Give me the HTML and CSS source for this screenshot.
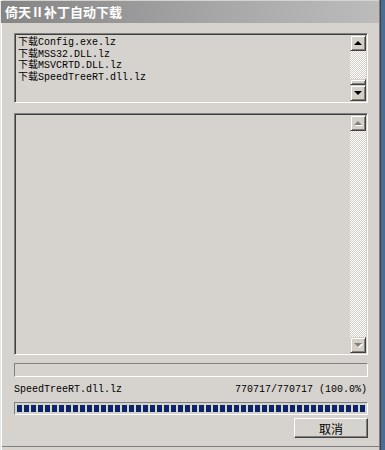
FILE: index.html
```html
<!DOCTYPE html>
<html>
<head>
<meta charset="utf-8">
<link rel="stylesheet" href="styles.css">
</head>
<body>
<div class="desk">
  <div class="window">
    <div class="titlebar">倚天Ⅱ补丁自动下载</div>
    <div class="content">
      <div class="box list">
        <div class="lines">
          <div>下载Config.exe.lz</div>
          <div>下载MSS32.DLL.lz</div>
          <div>下载MSVCRTD.DLL.lz</div>
          <div>下载SpeedTreeRT.dll.lz</div>
        </div>
        <div class="vscroll">
          <div class="sbtn"><span class="arr up"></span></div>
          <div class="track"></div>
          <div class="thumb"></div>
          <div class="sbtn"><span class="arr down"></span></div>
        </div>
      </div>
      <div class="box log">
        <div class="lines"></div>
        <div class="vscroll">
          <div class="sbtn"><span class="arr up dis"></span></div>
          <div class="track"></div>
          <div class="sbtn"><span class="arr down dis"></span></div>
        </div>
      </div>
      <div class="statusbar"></div>
      <div class="info">
        <span>SpeedTreeRT.dll.lz</span>
        <span>770717/770717 (100.0%)</span>
      </div>
      <div class="progress"><div class="fill"></div></div>
      <div class="actions"><button class="btn">取消</button></div>
    </div>
  </div>
</div>
</body>
</html>
```

FILE: styles.css
```css
* { box-sizing: border-box; }
html, body { margin: 0; padding: 0; }
body { width: 385px; height: 450px; overflow: hidden; background: #4a6d96; }
.desk { width: 385px; height: 450px; }
.window {
  width: 381px;
  height: 450px;
  background: #d6d3ce;
  border-right: 1px solid #404040;
  box-shadow: inset 1px 0 #e8e6e2, inset 2px 0 #fff, inset -1px 0 #808080;
  display: flex;
  flex-direction: column;
  position: relative;
}
.window::after {
  content: "";
  position: absolute;
  left: 2px; right: 1px; top: 446px;
  height: 1px;
  background: #808080;
}
.titlebar {
  height: 22px;
  margin: 1px 1px 0 1px;
  background: linear-gradient(to right, #858585, #a8a8a8 60%, #bcbcbc);
  color: #fff;
  font: bold 13px/21px "Noto Sans CJK SC", sans-serif;
  padding-left: 4px;
}
.content {
  display: flex;
  flex-direction: column;
  padding: 10px 12px 0 14px;
}
.box {
  display: flex;
  border-top: 1px solid #808080;
  border-left: 1px solid #808080;
  border-right: 1px solid #fff;
  border-bottom: 1px solid #fff;
  box-shadow: inset 1px 1px #404040, inset -1px -1px #d4d0c8;
  padding: 1px;
}
.list { height: 70px; }
.log { height: 242px; margin-top: 10px; }
.lines {
  flex: 1;
  padding: 2px 0 0 2px;
  font: 10px/11.5px "Liberation Mono", "Noto Sans CJK SC", monospace;
  color: #000;
}
.vscroll {
  width: 16px;
  display: flex;
  flex-direction: column;
}
.track {
  flex: 1;
  background: repeating-conic-gradient(#fff 0 25%, #d4d0c8 0 50%) 0 0 / 2px 2px;
}
.sbtn, .thumb {
  background: #d4d0c8;
  border-top: 1px solid #d4d0c8;
  border-left: 1px solid #d4d0c8;
  border-right: 1px solid #404040;
  border-bottom: 1px solid #404040;
  box-shadow: inset 1px 1px #fff, inset -1px -1px #808080;
}
.sbtn {
  height: 16px;
  display: flex;
  align-items: center;
  justify-content: center;
}
.thumb { height: 6px; }
.arr { width: 0; height: 0; border-left: 4px solid transparent; border-right: 4px solid transparent; }
.arr.up { border-bottom: 4px solid #000; }
.arr.down { border-top: 4px solid #000; }
.arr.up.dis { border-bottom-color: #808080; filter: drop-shadow(1px 1px 0 #fff); }
.arr.down.dis { border-top-color: #808080; filter: drop-shadow(1px 1px 0 #fff); }
.statusbar {
  height: 14px;
  margin-top: 8px;
  border-top: 1px solid #808080;
  border-left: 1px solid #808080;
  border-right: 1px solid #fff;
  border-bottom: 1px solid #fff;
}
.info {
  display: flex;
  justify-content: space-between;
  margin-top: 5px;
  height: 16px;
  font: 10px/16px "Liberation Mono", "Noto Sans CJK SC", monospace;
  color: #000;
  padding-right: 1px;
}
.progress {
  margin-top: 4px;
  height: 13px;
  border-top: 1px solid #808080;
  border-left: 1px solid #808080;
  border-right: 1px solid #fff;
  border-bottom: 1px solid #fff;
  padding: 2px;
}
.fill {
  height: 100%;
  background: repeating-linear-gradient(to right, #0a246a 0 5px, transparent 5px 7px);
}
.actions {
  display: flex;
  justify-content: flex-end;
  margin-top: 3px;
}
.btn {
  width: 74px;
  height: 20px;
  padding: 0;
  background: #d6d3ce;
  border-top: 1px solid #fff;
  border-left: 1px solid #fff;
  border-right: 1px solid #404040;
  border-bottom: 1px solid #404040;
  box-shadow: inset -1px -1px #808080;
  font: 12px/17px "Noto Sans CJK SC", sans-serif;
  color: #000;
}
```
